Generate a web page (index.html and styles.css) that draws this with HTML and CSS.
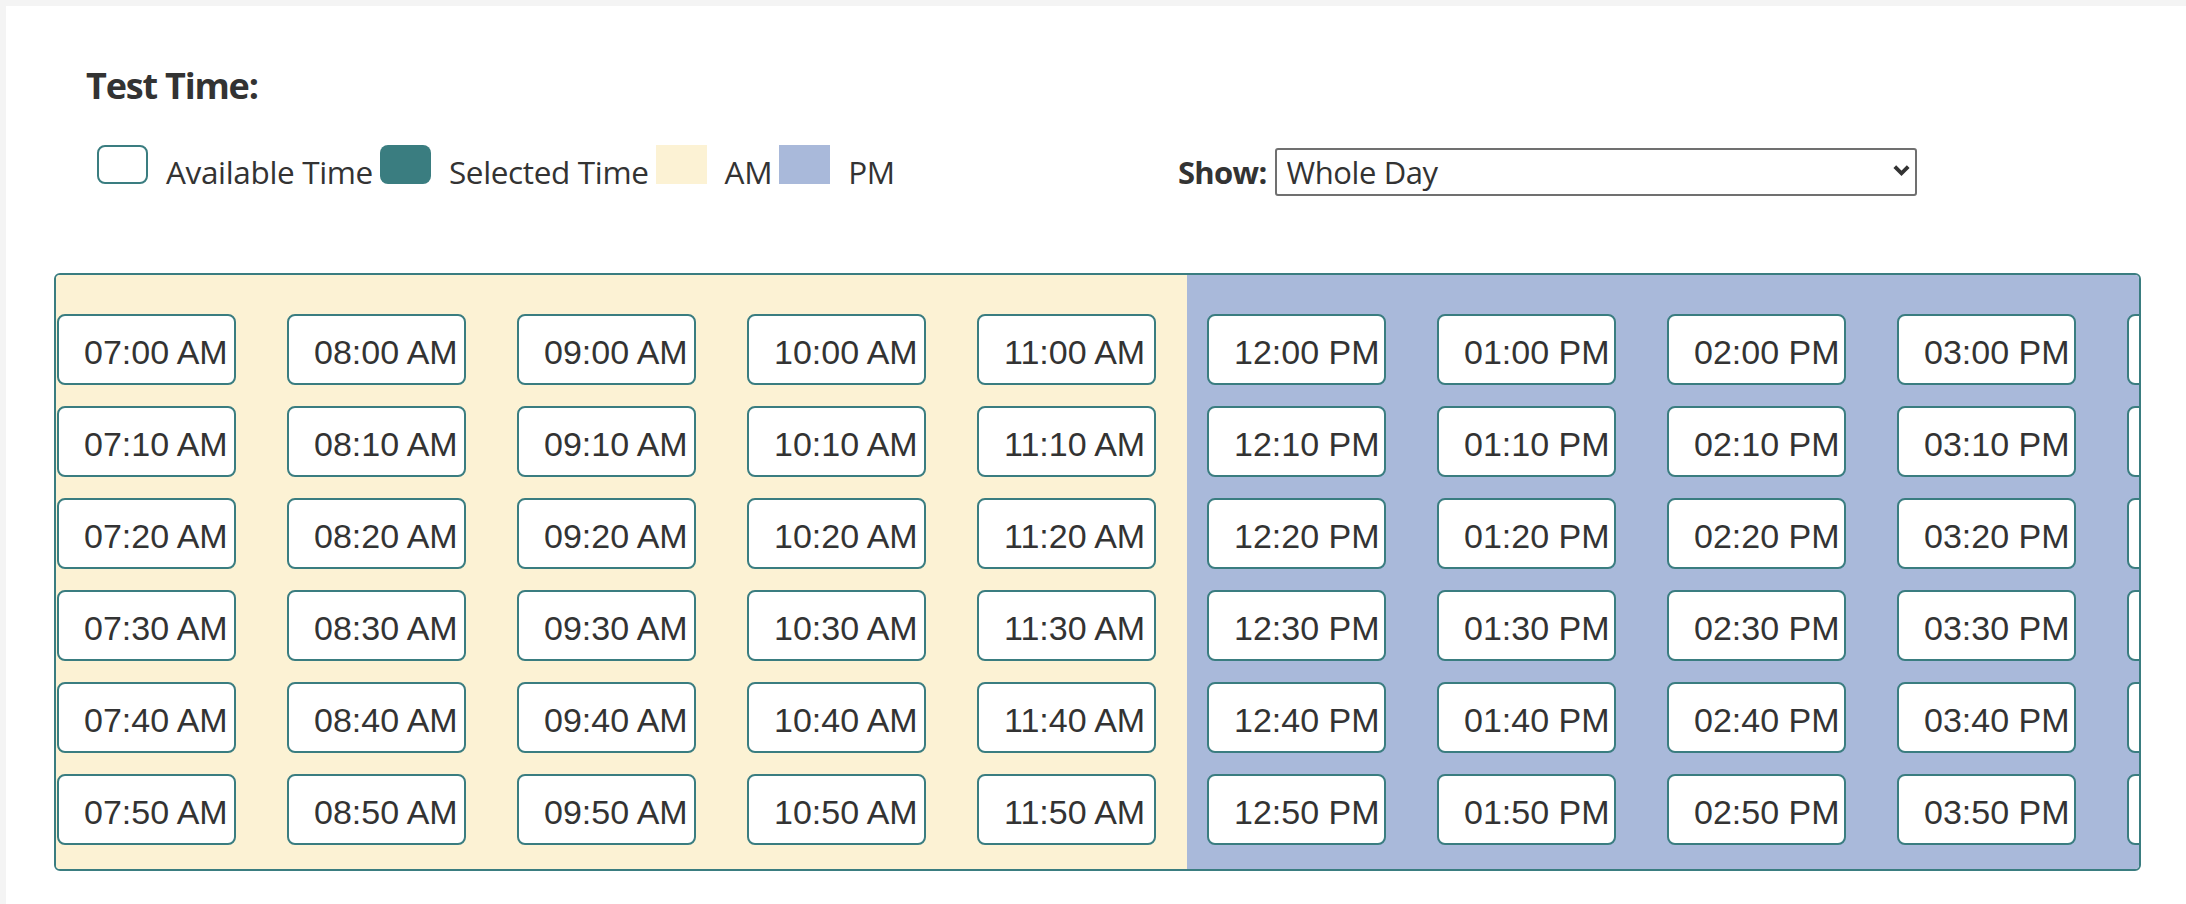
FILE: index.html
```html
<!DOCTYPE html>
<html lang="en">
<head>
<meta charset="utf-8">
<title>Test Time</title>
<link rel="stylesheet" href="styles.css">
</head>
<body>
<div class="panel">
  <h2 class="title">Test Time:</h2>
  <div class="toolbar">
    <div class="legend">
      <div class="swatch swatch-available"></div>
      <span class="legend-label">Available Time</span>
      <div class="swatch swatch-selected"></div>
      <span class="legend-label">Selected Time</span>
      <div class="swatch swatch-am"></div>
      <span class="legend-label">AM</span>
      <div class="swatch swatch-pm"></div>
      <span class="legend-label">PM</span>
    </div>
    <div class="show">
      <label class="show-label" for="show-select">Show:</label>
      <span class="select-wrap">
        <select id="show-select" class="select">
          <option>Whole Day</option>
          <option>AM</option>
          <option>PM</option>
        </select>
        <svg class="chevron" viewBox="0 0 17 13" aria-hidden="true"><path d="M1.8 2.6 L8.5 9.4 L15.2 2.6" fill="none" stroke="#333" stroke-width="3.8"/></svg>
      </span>
    </div>
  </div>
  <div class="schedule">
    <div class="period period-am">
      <div class="column">
        <button class="slot">07:00 AM</button><button class="slot">07:10 AM</button><button class="slot">07:20 AM</button><button class="slot">07:30 AM</button><button class="slot">07:40 AM</button><button class="slot">07:50 AM</button>
      </div>
      <div class="column">
        <button class="slot">08:00 AM</button><button class="slot">08:10 AM</button><button class="slot">08:20 AM</button><button class="slot">08:30 AM</button><button class="slot">08:40 AM</button><button class="slot">08:50 AM</button>
      </div>
      <div class="column">
        <button class="slot">09:00 AM</button><button class="slot">09:10 AM</button><button class="slot">09:20 AM</button><button class="slot">09:30 AM</button><button class="slot">09:40 AM</button><button class="slot">09:50 AM</button>
      </div>
      <div class="column">
        <button class="slot">10:00 AM</button><button class="slot">10:10 AM</button><button class="slot">10:20 AM</button><button class="slot">10:30 AM</button><button class="slot">10:40 AM</button><button class="slot">10:50 AM</button>
      </div>
      <div class="column">
        <button class="slot">11:00 AM</button><button class="slot">11:10 AM</button><button class="slot">11:20 AM</button><button class="slot">11:30 AM</button><button class="slot">11:40 AM</button><button class="slot">11:50 AM</button>
      </div>
    </div>
    <div class="period period-pm">
      <div class="column">
        <button class="slot">12:00 PM</button><button class="slot">12:10 PM</button><button class="slot">12:20 PM</button><button class="slot">12:30 PM</button><button class="slot">12:40 PM</button><button class="slot">12:50 PM</button>
      </div>
      <div class="column">
        <button class="slot">01:00 PM</button><button class="slot">01:10 PM</button><button class="slot">01:20 PM</button><button class="slot">01:30 PM</button><button class="slot">01:40 PM</button><button class="slot">01:50 PM</button>
      </div>
      <div class="column">
        <button class="slot">02:00 PM</button><button class="slot">02:10 PM</button><button class="slot">02:20 PM</button><button class="slot">02:30 PM</button><button class="slot">02:40 PM</button><button class="slot">02:50 PM</button>
      </div>
      <div class="column">
        <button class="slot">03:00 PM</button><button class="slot">03:10 PM</button><button class="slot">03:20 PM</button><button class="slot">03:30 PM</button><button class="slot">03:40 PM</button><button class="slot">03:50 PM</button>
      </div>
      <div class="column">
        <button class="slot" aria-label="04:00 PM"></button><button class="slot" aria-label="04:10 PM"></button><button class="slot" aria-label="04:20 PM"></button><button class="slot" aria-label="04:30 PM"></button><button class="slot" aria-label="04:40 PM"></button><button class="slot" aria-label="04:50 PM"></button>
      </div>
    </div>
  </div>
</div>
</body>
</html>
```

FILE: styles.css
```css
* {
  box-sizing: border-box;
}

html,
body {
  margin: 0;
  padding: 0;
}

body {
  background: #f4f4f4;
  font-family: "Open Sans", "Liberation Sans", sans-serif;
  color: #333;
  overflow: hidden;
}

.panel {
  margin: 6px 0 0 6px;
  background: #fff;
  min-height: calc(100vh - 6px);
  padding: 60px 0 0 48px;
}

.title {
  margin: 0 0 0 32px;
  font-size: 36px;
  line-height: 40px;
  font-weight: 700;
  letter-spacing: -1.2px;
  color: #333;
}

.toolbar {
  display: flex;
  align-items: baseline;
  margin-top: 39px;
  padding-left: 43px;
}

.legend {
  display: flex;
  align-items: baseline;
  width: 1081px;
  flex: none;
}

.swatch {
  width: 51px;
  height: 39px;
  margin-right: 18px;
  flex: none;
}

.swatch-available {
  border: 2px solid #3a7d80;
  border-radius: 8px;
  background: #fff;
}

.swatch-selected {
  background: #3a7d80;
  border-radius: 8px;
}

.swatch-am {
  background: #fcf2d4;
}

.swatch-pm {
  background: #a9b9da;
}

.legend-label {
  font-size: 31.5px;
  letter-spacing: -0.35px;
  margin-right: 7px;
}

.show {
  display: flex;
  align-items: baseline;
}

.show-label {
  font-weight: 700;
  font-size: 31px;
  letter-spacing: -0.7px;
  margin-right: 8px;
}

.select-wrap {
  position: relative;
  display: inline-flex;
}

.select {
  -webkit-appearance: none;
  appearance: none;
  width: 642px;
  height: 48px;
  margin: 0;
  padding: 0 0 0 10px;
  border: 2px solid #707070;
  border-radius: 3px;
  background: #fff;
  font-family: "Open Sans", "Liberation Sans", sans-serif;
  font-size: 31px;
  letter-spacing: -0.4px;
  color: #333;
}

.chevron {
  position: absolute;
  right: 7px;
  top: 16px;
  width: 17px;
  height: 13px;
  pointer-events: none;
}

.schedule {
  display: flex;
  margin-top: 77px;
  width: 2087px;
  height: 598px;
  border: 2px solid #3a7d80;
  border-radius: 6px;
  overflow: hidden;
}

.period {
  display: flex;
  gap: 51px;
  padding: 39px 0 24px;
  flex: none;
}

.period-am {
  background: #fcf2d4;
  width: 1131px;
  padding-left: 1px;
}

.period-pm {
  background: #a9b9da;
  padding-left: 20px;
  padding-right: 20px;
}

.column {
  display: flex;
  flex-direction: column;
  gap: 21px;
}

.slot {
  display: flex;
  align-items: center;
  width: 179px;
  height: 71px;
  margin: 0;
  padding: 6px 0 0 25px;
  border: 2px solid #3a7d80;
  border-radius: 8px;
  background: #fff;
  font-family: "Liberation Sans", Arial, sans-serif;
  font-size: 34px;
  color: #333;
  white-space: nowrap;
  overflow: hidden;
}
```
